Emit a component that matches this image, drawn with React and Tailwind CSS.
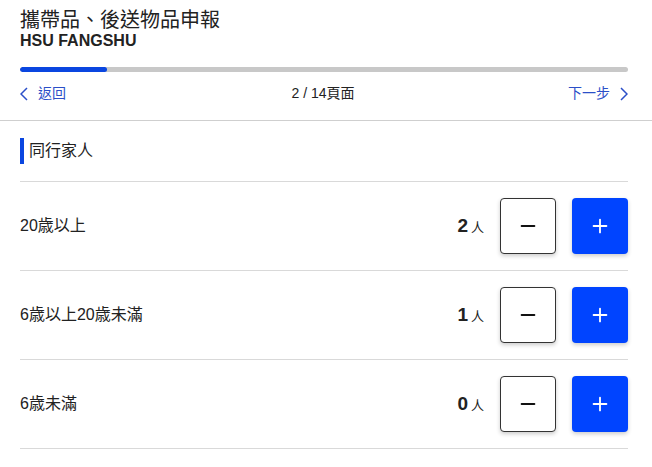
import { Minus, Plus } from 'lucide-react'

const ROWS = [
  { label: '20歳以上', count: 2 },
  { label: '6歳以上20歳未滿', count: 1 },
  { label: '6歳未滿', count: 0 },
]

function Chevron({ dir }) {
  return (
    <svg width="8" height="14" viewBox="0 0 8 14" fill="none" stroke="currentColor" strokeWidth="1.5">
      {dir === 'left'
        ? <polyline points="7,1 1,7 7,13" />
        : <polyline points="1,1 7,7 1,13" />}
    </svg>
  )
}

export default function App() {
  const progress = (2 / 14) * 100

  return (
    <div
      className="w-[652px] h-[467px] bg-white text-[#222] overflow-hidden"
      style={{ fontFamily: '"Liberation Sans", "Noto Sans CJK TC", sans-serif' }}
    >
      {/* Header */}
      <div className="pl-5 pr-6 pt-2">
        <h1 className="text-[20px] leading-[24px] font-normal">攜帶品、後送物品申報</h1>
        <p className="text-[16px] leading-[18px] font-bold">HSU FANGSHU</p>

        <div className="mt-[17px] h-[5px] bg-[#c8c8c8] rounded-full overflow-hidden">
          <div className="h-full bg-[#0a46e0] rounded-full" style={{ width: `${progress}%` }} />
        </div>

        <div className="flex items-center justify-between h-[48px] text-[14px] pb-[5px]">
          <button className="flex items-center gap-[10px] text-[#2b4fc8]">
            <Chevron dir="left" />
            返回
          </button>
          <span className="text-[#222] pl-[12px]">2 / 14頁面</span>
          <button className="flex items-center gap-[10px] text-[#2b4fc8]">
            下一步
            <Chevron dir="right" />
          </button>
        </div>
      </div>

      <div className="border-t border-[#cfcfcf]" />

      {/* Section */}
      <div className="pl-5 pr-6">
        <div className="flex items-center h-[61px] border-b border-[#d9d9d9]">
          <div className="flex items-center h-[26px] border-l-4 border-[#0a46e0] pl-[5px] text-[16px]">
            同行家人
          </div>
        </div>

        {ROWS.map(row => (
          <div key={row.label} className="flex items-center h-[89px] border-b border-[#d9d9d9]">
            <span className="flex-1 text-[16px]">{row.label}</span>
            <div className="flex items-baseline mr-4">
              <span className="text-[19px] font-bold">{row.count}</span>
              <span className="text-[13px] ml-[3px]">人</span>
            </div>
            <button className="w-[56px] h-[56px] flex items-center justify-center bg-white border border-[#333] rounded-[4px] shadow-[0_2px_4px_rgba(0,0,0,0.2)]">
              <Minus size={22} strokeWidth={2} className="text-[#111]" />
            </button>
            <button className="ml-4 w-[56px] h-[56px] flex items-center justify-center bg-[#0044ff] rounded-[4px] shadow-[0_2px_4px_rgba(0,0,0,0.2)]">
              <Plus size={22} strokeWidth={2} className="text-white" />
            </button>
          </div>
        ))}
      </div>
    </div>
  )
}
